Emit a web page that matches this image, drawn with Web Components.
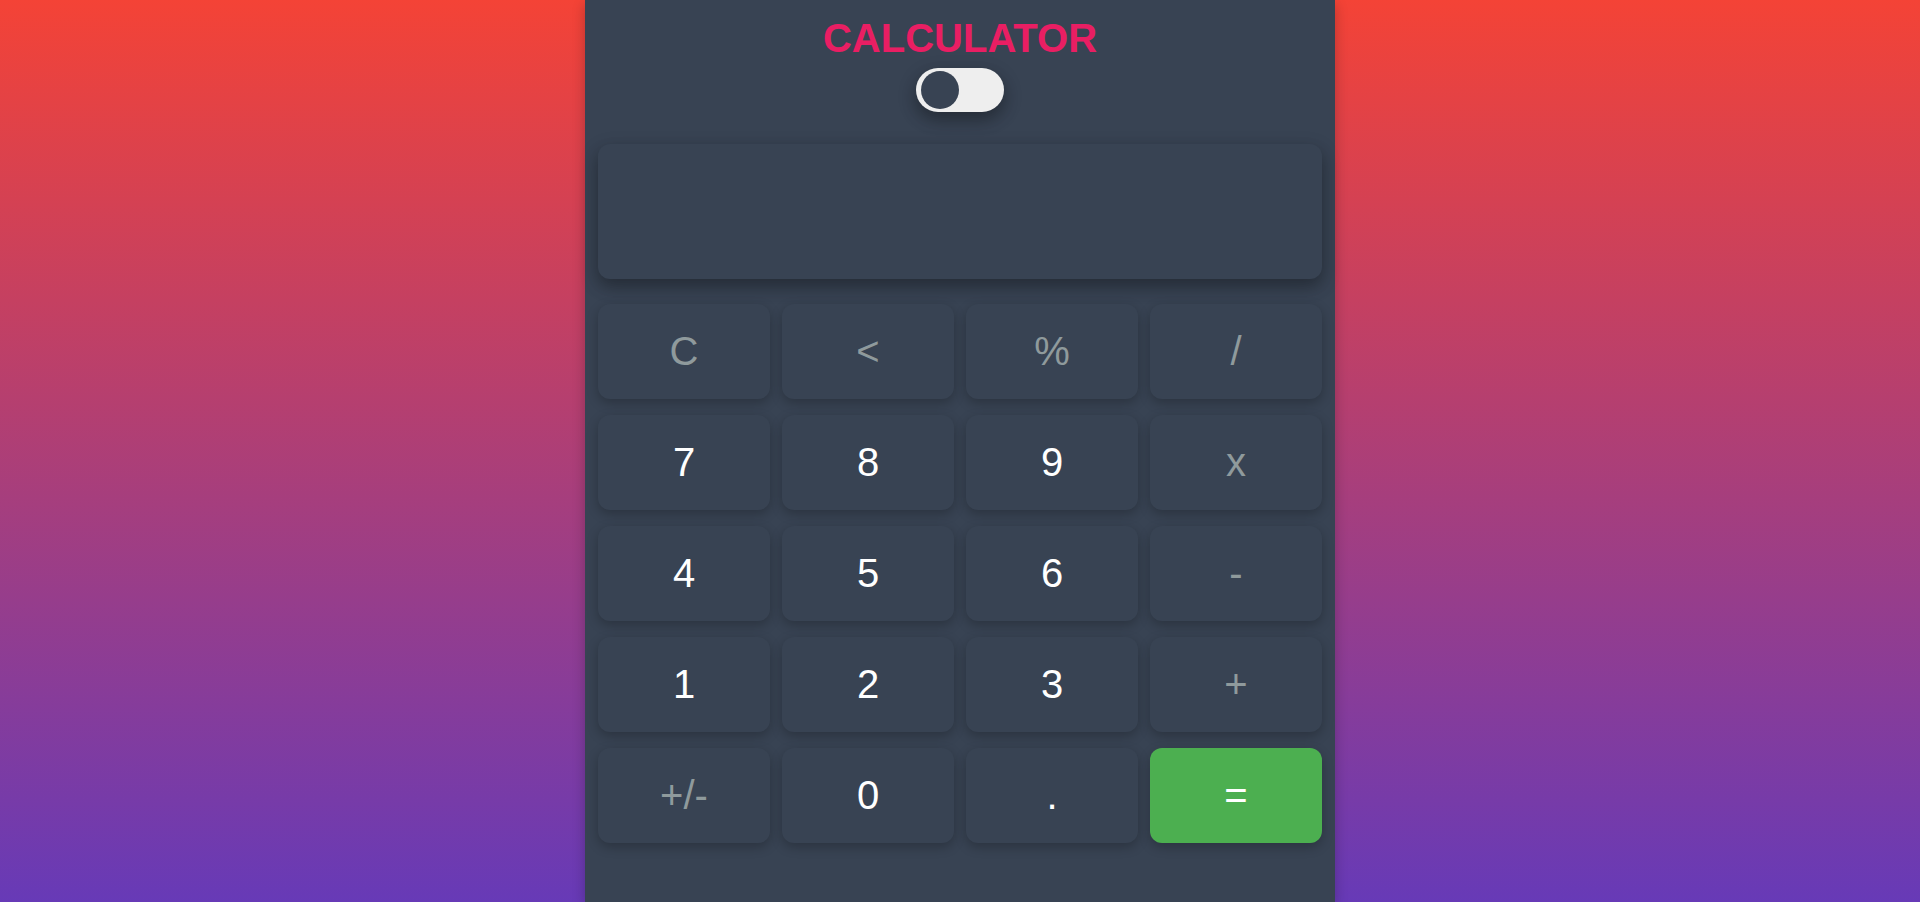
<!DOCTYPE html>
<html lang="en">
<head>
<meta charset="utf-8">
<title>Calculator</title>
<style>
  html, body { margin: 0; min-height: 100%; }
  body {
    --surface: #384353;
    --muted: #8f9a9c;
    min-height: 100vh;
    display: flex;
    justify-content: center;
    background: linear-gradient(#f44336, #673ab7);
    font-family: "Liberation Sans", Arial, sans-serif;
  }
</style>
</head>
<body>
<calc-app></calc-app>
<script>
class CalcElement extends HTMLElement {
  constructor() {
    super();
    this.attachShadow({ mode: "open" }).innerHTML = this.constructor.markup;
  }
}

customElements.define("theme-switch", class extends CalcElement {
  static markup = `
    <style>
      :host { display: block; width: 88px; height: 44px; }
      input {
        appearance: none; box-sizing: border-box; display: flex; align-items: center;
        width: 100%; height: 100%; margin: 0; padding: 0 5px;
        border-radius: 22px; background: #eee; cursor: pointer;
        box-shadow: 0 8px 16px rgba(0,0,0,.2), 0 6px 20px rgba(0,0,0,.19);
      }
      input::before {
        content: ""; width: 38px; height: 38px; border-radius: 50%; background: var(--surface);
      }
      input:checked { justify-content: flex-end; }
    </style>
    <input type="checkbox" role="switch" aria-label="Light theme">`;
});

customElements.define("calc-display", class extends CalcElement {
  static markup = `
    <style>
      :host { display: block; }
      input {
        box-sizing: border-box; display: block; width: 100%; height: 135px; margin: 0;
        padding: 0 16px; border: 0; border-radius: 12px; outline: 0;
        background: var(--surface); color: #fff; font: 56px "Liberation Sans", Arial, sans-serif;
        text-align: right;
        box-shadow: 0 8px 16px rgba(0,0,0,.2), 0 6px 20px rgba(0,0,0,.19);
      }
    </style>
    <input type="text" readonly aria-label="Result">`;
  get value() { return this.shadowRoot.querySelector("input").value; }
  set value(v) { this.shadowRoot.querySelector("input").value = v; }
});

customElements.define("calc-key", class extends CalcElement {
  static markup = `
    <style>
      :host { display: block; }
      button {
        display: block; width: 100%; height: 95px; margin: 0; padding: 0; border: 0;
        border-radius: 12px; background: var(--surface); color: #fff; cursor: pointer;
        font: 40px "Liberation Sans", Arial, sans-serif;
        box-shadow: 0 4px 12px rgba(0,0,0,.24);
      }
      :host([kind="operator"]) button { color: var(--muted); }
      :host([kind="equals"]) button { background: #4caf50; }
    </style>
    <button type="button"><slot></slot></button>`;
});

customElements.define("calc-app", class extends CalcElement {
  static markup = `
    <style>
      :host {
        box-sizing: border-box; display: flex; flex-direction: column; align-items: center;
        width: 100%; max-width: 750px; padding: 14px 13px; background: var(--surface);
        box-shadow: 0 4px 12px rgba(0,0,0,.24);
      }
      h1 { margin: 0 0 6px; color: #e91e63; font-size: 40px; line-height: 48px; }
      calc-display { width: 100%; margin: 32px 0 25px; }
      main { display: grid; grid-template-columns: repeat(4, 1fr); gap: 16px 12px; width: 100%; }
    </style>
    <h1>CALCULATOR</h1>
    <theme-switch></theme-switch>
    <calc-display></calc-display>
    <main>
      <calc-key kind="operator">C</calc-key>
      <calc-key kind="operator">&lt;</calc-key>
      <calc-key kind="operator">%</calc-key>
      <calc-key kind="operator">/</calc-key>
      <calc-key>7</calc-key>
      <calc-key>8</calc-key>
      <calc-key>9</calc-key>
      <calc-key kind="operator">x</calc-key>
      <calc-key>4</calc-key>
      <calc-key>5</calc-key>
      <calc-key>6</calc-key>
      <calc-key kind="operator">-</calc-key>
      <calc-key>1</calc-key>
      <calc-key>2</calc-key>
      <calc-key>3</calc-key>
      <calc-key kind="operator">+</calc-key>
      <calc-key kind="operator">+/-</calc-key>
      <calc-key>0</calc-key>
      <calc-key>.</calc-key>
      <calc-key kind="equals">=</calc-key>
    </main>`;

  connectedCallback() {
    const display = this.shadowRoot.querySelector("calc-display");
    this.shadowRoot.querySelector("main").addEventListener("click", (event) => {
      const key = event.target.closest("calc-key");
      if (key) display.value = this.press(key.textContent, display.value);
    });
  }

  press(key, text) {
    switch (key) {
      case "C": return "";
      case "<": return text.slice(0, -1);
      case "+/-": return text.startsWith("-") ? text.slice(1) : text && "-" + text;
      case "=": return this.evaluate(text);
      default: return text + key;
    }
  }

  evaluate(text) {
    try {
      const source = text.replace(/x/g, "*").replace(/%/g, "/100");
      return source ? String(Function(`return (${source})`)()) : "";
    } catch {
      return "Error";
    }
  }
});
</script>
</body>
</html>
